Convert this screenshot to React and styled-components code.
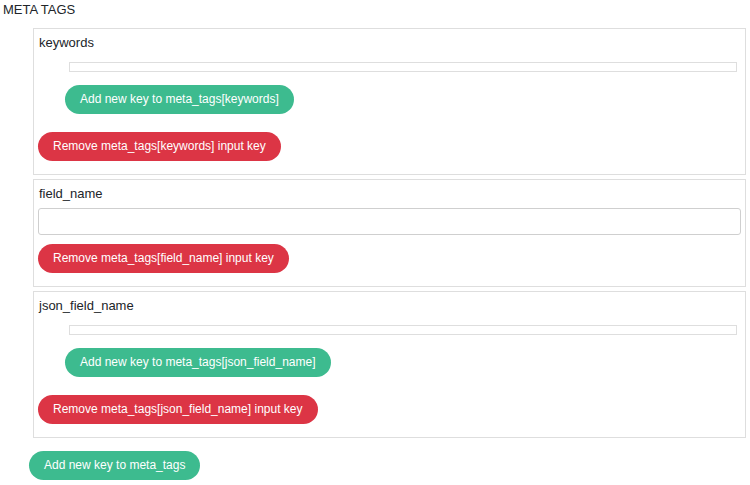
import React from 'react'
import styled, { createGlobalStyle } from 'styled-components'

const GlobalStyle = createGlobalStyle`
  html, body {
    margin: 0;
    padding: 0;
    background: #fff;
  }
  body {
    font-family: "Liberation Sans", Arial, sans-serif;
    color: #212529;
  }
`

const Page = styled.div`
  padding: 2px 4px 0 3px;
`

const Title = styled.div`
  font-size: 13px;
  line-height: 15px;
`

const Group = styled.div`
  margin: 11px 0 0 30px;
  display: flex;
  flex-direction: column;
  gap: 4px;
`

const Box = styled.div`
  border: 1px solid #dedede;
  padding: 6px 4px 13px 4px;
  display: flex;
  flex-direction: column;
  align-items: flex-start;
`

const Label = styled.div`
  font-size: 13px;
  line-height: 15px;
  padding-left: 1px;
`

const Nested = styled.div`
  align-self: stretch;
  margin: 12px 0 0 27px;
  display: flex;
  flex-direction: column;
  align-items: flex-start;
`

const EmptyBox = styled.div`
  align-self: stretch;
  margin: 0 4px;
  height: 10px;
  box-sizing: border-box;
  border: 1px solid #dedede;
`

const TextInput = styled.input`
  align-self: stretch;
  margin-top: 7px;
  height: 27px;
  box-sizing: border-box;
  border: 1px solid #cfcfcf;
  border-radius: 3px;
  padding: 0 6px;
  font: 13px "Liberation Sans", Arial, sans-serif;
  outline: none;
`

const Button = styled.button`
  height: 29px;
  margin-top: ${({ $gap }) => $gap || 0}px;
  margin-left: ${({ $indent }) => $indent || 0}px;
  padding: 0 15px;
  border: none;
  border-radius: 15px;
  background: ${({ $variant }) => ($variant === 'danger' ? '#dc3545' : '#3dbb8f')};
  color: #fff;
  font: 12px/29px "Liberation Sans", Arial, sans-serif;
  white-space: nowrap;
  cursor: pointer;
`

function ObjectField({ name }) {
  return (
    <Box>
      <Label>{name}</Label>
      <Nested>
        <EmptyBox />
        <Button $gap={13}>Add new key to meta_tags[{name}]</Button>
      </Nested>
      <Button $variant="danger" $gap={18}>Remove meta_tags[{name}] input key</Button>
    </Box>
  )
}

function TextField({ name }) {
  return (
    <Box>
      <Label>{name}</Label>
      <TextInput type="text" />
      <Button $variant="danger" $gap={9}>Remove meta_tags[{name}] input key</Button>
    </Box>
  )
}

export default function App() {
  return (
    <>
      <GlobalStyle />
      <Page>
        <Title>META TAGS</Title>
        <Group>
          <ObjectField name="keywords" />
          <TextField name="field_name" />
          <ObjectField name="json_field_name" />
        </Group>
        <Button $gap={13} $indent={26}>Add new key to meta_tags</Button>
      </Page>
    </>
  )
}
